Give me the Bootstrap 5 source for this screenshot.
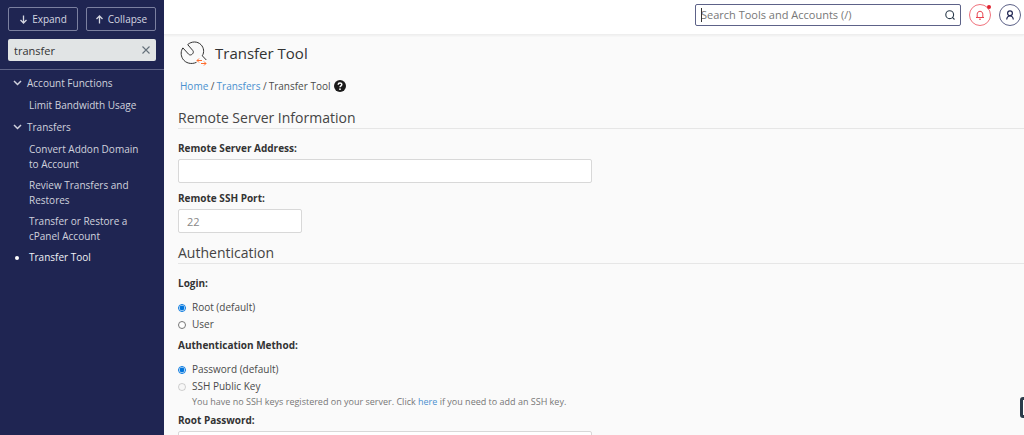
<!DOCTYPE html>
<html lang="en">
<head>
<meta charset="utf-8">
<meta name="viewport" content="width=device-width, initial-scale=1">
<title>Transfer Tool</title>
<link href="https://cdn.jsdelivr.net/npm/bootstrap@5.3.0/dist/css/bootstrap.min.css" rel="stylesheet">
<script src="https://cdn.jsdelivr.net/npm/bootstrap@5.3.0/dist/js/bootstrap.bundle.min.js" defer></script>
<style>
body{font-family:"Open Sans",sans-serif;font-size:10px;line-height:15px;color:#4a4a4a;background:#fafafa}
a{color:#4a90cf;text-decoration:none}
.sidebar{width:164px;background:#1f2552;color:#d0d2dd}
.sidebar a{color:inherit}
.side-top{padding:7px 8px 0}
.tree-btn{--bs-btn-color:#d5d7e1;--bs-btn-border-color:#7b80a0;--bs-btn-hover-color:#fff;--bs-btn-hover-border-color:#fff;--bs-btn-padding-x:0;--bs-btn-padding-y:0;--bs-btn-font-size:10px;--bs-btn-border-radius:2px;height:24px}
.filter-box,.filter-box:focus{height:22px;min-height:0;font-size:11px;background:#e1e4e5;color:#333;border:0;border-radius:2px;padding:0 24px 0 6px}
.clear-btn{right:2px;top:3px;width:16px;height:16px;color:#64707a}
.side-rule{border-top:1px solid #5f6488;padding-top:2px}
.group-head{height:22px;padding-left:13px;gap:5px}
.tool-list{padding:1px 0 0 29px}
.tool-list li{padding:3px 20px 3px 0}
.current-tool{color:#f0f1f5}
.dot{left:-14px;top:9px;width:4px;height:4px;background:#fff}
.topbar{height:35px;background:#fff;border-bottom:1px solid #eee;box-shadow:0 1px 2px #0000000d;padding:0 3px 5px 0;gap:8px}
.search-wrap{width:266px}
.search-box,.search-box:focus{height:22px;min-height:0;font-size:11px;border:1px solid #5d6288;border-radius:2px;padding:0 28px 0 5px;box-shadow:none}
.search-box::placeholder{color:#777}
.caret{left:6px;top:4px;width:1px;height:14px;background:#333}
.search-btn{right:3px;top:3px;width:16px;height:16px;color:#293a4a}
.round-btn{width:22px;height:22px;background:#fff;border:1px solid #5d6288;color:#1f2552}
.alert-btn{border-color:#f0717c;color:#e8434f}
.alert-dot{right:-1px;top:0;width:4px;height:4px;background:#e0222f}
.content{padding:5px 0 0 14px}
.page-title{font-size:15px;line-height:20px;color:#333}
.crumbs{padding-left:2px;margin:12px 0 14px;height:16px;gap:2px}
.help-link{margin-left:2px}
.section-head{font-size:14px;line-height:20px;color:#444;border-bottom:1px solid #e6e6e6;margin:10px 0 12px}
.field-label{font-size:10px;font-weight:700;color:#333;line-height:15px;display:block;margin:0 0 3px}
legend.field-label{float:none;margin-bottom:8px}
.field,.field:focus{font-size:11px;min-height:0;border:1px solid #d8d8d8;border-radius:2px;height:24px;padding:0 8px;color:#444}
.field::placeholder{color:#888}
.field-wide{width:414px;max-width:100%}
.field-port,.field-port:focus{width:124px}
.choices{margin-bottom:5px}
.choice{height:17px;gap:6px}
.choice input{width:8px;height:8px;margin:0;accent-color:#0075dd}
.hint{font-size:9px;line-height:13px;color:#777;padding-left:14px}
.side-tab{right:-6px;bottom:17px;width:10px;height:21px;border:3px solid #2c3b4a;border-radius:3px;background:#fff}
</style>
</head>
<body>
<div class="d-flex vh-100 overflow-hidden">
  <nav class="sidebar flex-shrink-0" aria-label="Tools">
    <div class="side-top">
      <div class="d-flex gap-2 mb-2">
        <button type="button" class="btn tree-btn flex-fill w-50 d-flex align-items-center justify-content-center gap-1"><svg width="9" height="9" viewBox="0 0 9 9" fill="none" stroke="currentColor" stroke-width="1.3"><path d="M4.500 .5V8M1.500 5L4.500 8L7.500 5"/></svg>Expand</button>
        <button type="button" class="btn tree-btn flex-fill w-50 d-flex align-items-center justify-content-center gap-1"><svg width="9" height="9" viewBox="0 0 9 9" fill="none" stroke="currentColor" stroke-width="1.3"><path d="M4.500 8.500V1M1.500 4L4.500 1L7.500 4"/></svg>Collapse</button>
      </div>
      <div class="position-relative">
        <input class="form-control filter-box" type="text" value="transfer" aria-label="Filter tools">
        <button type="button" class="clear-btn position-absolute border-0 bg-transparent p-0 d-flex align-items-center justify-content-center" aria-label="Clear"><svg width="8" height="8" viewBox="0 0 8 8" stroke="currentColor" stroke-width="1.1"><path d="M.5 .5L7.500 7.500M7.500 .5L.5 7.500"/></svg></button>
      </div>
    </div>
    <div class="side-rule mt-2">
      <div class="group-head d-flex align-items-center"><svg width="9" height="6" viewBox="0 0 9 6" fill="none" stroke="currentColor" stroke-width="1.500"><path d="M1 1L4.500 4.500L8 1"/></svg><a href="#">Account Functions</a></div>
      <ul class="tool-list list-unstyled mb-0"><li><a href="#">Limit Bandwidth Usage</a></li></ul>
      <div class="group-head d-flex align-items-center"><svg width="9" height="6" viewBox="0 0 9 6" fill="none" stroke="currentColor" stroke-width="1.500"><path d="M1 1L4.500 4.500L8 1"/></svg><a href="#">Transfers</a></div>
      <ul class="tool-list list-unstyled mb-0">
        <li><a href="#">Convert Addon Domain to Account</a></li>
        <li><a href="#">Review Transfers and Restores</a></li>
        <li><a href="#">Transfer or Restore a cPanel Account</a></li>
        <li class="position-relative current-tool"><span class="dot position-absolute rounded-circle"></span><a href="#" aria-current="page">Transfer Tool</a></li>
      </ul>
    </div>
  </nav>
  <div class="flex-grow-1 d-flex flex-column overflow-hidden">
    <header class="topbar d-flex align-items-center justify-content-end flex-shrink-0">
      <div class="search-wrap position-relative">
        <input class="form-control search-box" type="search" placeholder="Search Tools and Accounts (/)" aria-label="Search">
        <span class="caret position-absolute"></span>
        <button type="button" class="search-btn position-absolute border-0 bg-transparent p-0 d-flex align-items-center justify-content-center" aria-label="Search"><svg width="10" height="10" viewBox="0 0 10 10" fill="none" stroke="currentColor" stroke-width="1.100"><circle cx="4.700" cy="4.700" r="3.900"/><path d="M7.200 7.200L9.500 9.500"/></svg></button>
      </div>
      <button type="button" class="round-btn alert-btn rounded-circle position-relative p-0 d-flex align-items-center justify-content-center" aria-label="Notifications"><svg width="10" height="10" viewBox="0 0 10 10" fill="none" stroke="currentColor"><path d="M1 7.500H9M2.200 7.500V4.200C2.200 2.500 3.400 1.300 5 1.300S7.800 2.500 7.800 4.200V7.500M4 9.200H6"/></svg><span class="alert-dot position-absolute rounded-circle"></span></button>
      <button type="button" class="round-btn rounded-circle p-0 d-flex align-items-center justify-content-center" aria-label="Account"><svg width="10" height="10" viewBox="0 0 10 10" fill="none" stroke="currentColor" stroke-width="1.200"><circle cx="5" cy="3.300" r="2.400"/><path d="M1.700 9.500C1.900 7.300 3.200 6 5 6S8.100 7.300 8.300 9.500"/></svg></button>
    </header>
    <main class="content">
      <div class="d-flex align-items-center">
        <svg class="me-2" width="29" height="26" viewBox="-1 0 29 26" fill="none" stroke="#333"><path d="M17.500 22.300C12.500 24.700 6.500 23.300 3.700 18.800C1.500 15 1.800 10.800 3.900 7.900L9.600 14.200C10.700 15.300 12.200 15.100 13.300 14.100C14.500 13 14.700 11.600 13.700 10.400L8.700 4.600C12.500 1.100 18.500 1.100 22 4.700C25 7.800 25.400 12.300 23.300 15.800L27.300 20"/><path d="M18 20.500H23M20 18.500L18 20.500L20 22.500M22 23.500H27M25 21.500L27 23.500L25 25.500" stroke="#ff6c2c"/></svg>
        <h1 class="page-title mb-0">Transfer Tool</h1>
      </div>
      <nav class="crumbs d-flex align-items-center" aria-label="Breadcrumb"><span><a href="#">Home</a> /</span><span><a href="#">Transfers</a> /</span><span>Transfer Tool</span><a class="help-link" href="#" aria-label="Help"><svg class="d-block" width="12" height="12" viewBox="0 0 12 12"><circle cx="6" cy="6" r="6" fill="#1b1b1b"/><path d="M4.200 4.700C4.200 2.500 7.800 2.500 7.800 4.600C7.800 5.800 6 5.800 6 7.200" fill="none" stroke="#fff" stroke-width="1.500"/><circle cx="6" cy="9.200" r=".9" fill="#fff"/></svg></a></nav>
      <form>
        <h2 class="section-head">Remote Server Information</h2>
        <label class="field-label" for="addr">Remote Server Address:</label>
        <input id="addr" type="text" class="form-control field field-wide mb-2">
        <label class="field-label" for="port">Remote SSH Port:</label>
        <input id="port" type="text" class="form-control field field-port" placeholder="22">
        <h2 class="section-head">Authentication</h2>
        <fieldset class="choices">
          <legend class="field-label">Login:</legend>
          <div class="choice d-flex align-items-center"><input type="radio" name="login" id="root" checked><label for="root">Root (default)</label></div>
          <div class="choice d-flex align-items-center"><input type="radio" name="login" id="user"><label for="user">User</label></div>
        </fieldset>
        <fieldset class="choices">
          <legend class="field-label">Authentication Method:</legend>
          <div class="choice d-flex align-items-center"><input type="radio" name="method" id="pw" checked><label for="pw">Password (default)</label></div>
          <div class="choice d-flex align-items-center"><input type="radio" name="method" id="key" disabled><label for="key">SSH Public Key</label></div>
          <div class="hint">You have no SSH keys registered on your server. Click <a href="#">here</a> if you need to add an SSH key.</div>
        </fieldset>
        <label class="field-label" for="rootpw">Root Password:</label>
        <input id="rootpw" type="password" class="form-control field field-wide">
      </form>
    </main>
  </div>
</div>
<div class="side-tab position-fixed"></div>
</body>
</html>
